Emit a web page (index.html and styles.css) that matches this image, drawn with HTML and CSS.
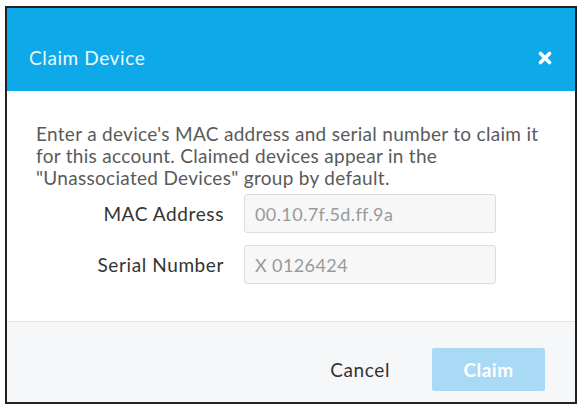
FILE: index.html
```html
<!DOCTYPE html>
<html>
<head>
<meta charset="utf-8">
<link rel="stylesheet" href="styles.css">
</head>
<body>
<div class="dialog">
  <div class="header">
    <span class="title">Claim Device</span>
    <svg class="close" width="14" height="14" viewBox="0 0 14 14"><path d="M2.5 2.5 L11.5 11.5 M11.5 2.5 L2.5 11.5" stroke="#fff" stroke-width="3.6" stroke-linecap="round"/></svg>
  </div>
  <div class="body">
    <p class="intro">Enter a device's MAC address and serial number to claim it for this account. Claimed devices appear in the "Unassociated Devices" group by default.</p>
    <div class="form">
      <label class="label">MAC Address</label>
      <div class="input">00.10.7f.5d.ff.9a</div>
      <label class="label">Serial Number</label>
      <div class="input">X 0126424</div>
    </div>
  </div>
  <div class="footer">
    <span class="cancel">Cancel</span>
    <span class="claim">Claim</span>
  </div>
</div>
</body>
</html>
```
FILE: styles.css
```css
html, body {
  margin: 0;
  padding: 0;
  background: #fff;
}
body {
  font-family: Lato, "Open Sans", sans-serif;
}
.dialog {
  box-sizing: border-box;
  width: 572px;
  height: 398px;
  margin: 6px 0 0 5px;
  border: 2px solid #222;
  display: flex;
  flex-direction: column;
  background: #fff;
}
.header {
  box-sizing: border-box;
  height: 83px;
  background: #0ea9e8;
  display: flex;
  align-items: center;
  justify-content: space-between;
  padding: 16px 23px 0 22px;
}
.title {
  color: #eef8fd;
  font-size: 19px;
  letter-spacing: 0.6px;
}
.close {
  display: block;
}
.body {
  flex: 1;
  padding: 32px 14px 0 29px;
}
.intro {
  margin: 0;
  font-size: 19px;
  letter-spacing: 0.3px;
  line-height: 22px;
  color: #5a5a5a;
}
.form {
  display: grid;
  grid-template-columns: 188px 252px;
  column-gap: 20px;
  row-gap: 12px;
  align-items: center;
  margin-top: 5px;
}
.label {
  text-align: right;
  font-size: 19px;
  letter-spacing: 0.6px;
  color: #333;
}
.input {
  box-sizing: border-box;
  height: 39px;
  border: 1px solid #ddd;
  border-radius: 3px;
  background: #f7f7f7;
  color: #9a9a9a;
  font-size: 18px;
  letter-spacing: 0.4px;
  display: flex;
  align-items: center;
  padding: 0 10px;
}
.footer {
  height: 81px;
  box-sizing: border-box;
  background: #f5f7f9;
  border-top: 1px solid #e3e6e9;
  display: flex;
  align-items: center;
  justify-content: flex-end;
  padding: 14px 30px 0 0;
  gap: 42px;
}
.cancel {
  font-size: 19px;
  letter-spacing: 0.6px;
  color: #333;
}
.claim {
  box-sizing: border-box;
  width: 113px;
  height: 43px;
  background: #a8d9f5;
  color: #fff;
  border-radius: 2px;
  font-size: 19px;
  font-weight: bold;
  letter-spacing: 0.5px;
  display: flex;
  align-items: center;
  justify-content: center;
}
```
